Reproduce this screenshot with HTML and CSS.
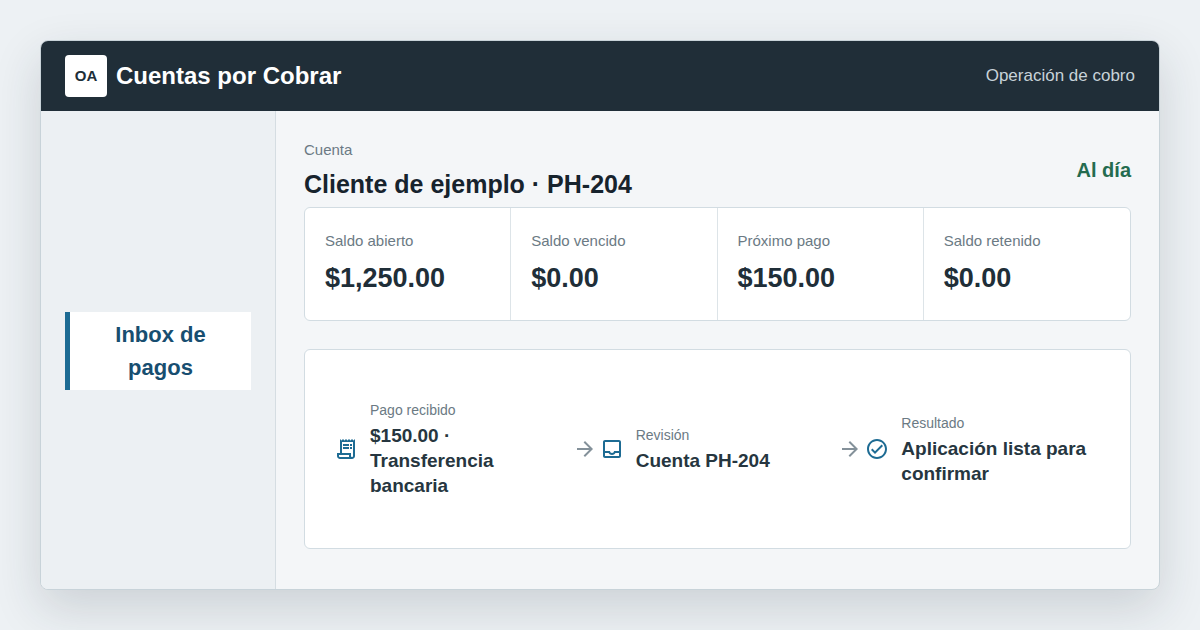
FILE: index.html
```
<!DOCTYPE html>
<html lang="es">

<head>
    <meta charset="UTF-8">
    <meta name="viewport" content="width=device-width, initial-scale=1.0">
    <title>Cuentas por Cobrar</title>
    <link rel="stylesheet" href="styles.css">
</head>

<body>
    <div class="window">
        <header class="topbar">
            <div class="brand">
                <span class="logo">OA</span>
                <span class="brand-name">Cuentas por Cobrar</span>
            </div>
            <span class="topbar-note">Operación de cobro</span>
        </header>

        <div class="layout">
            <nav class="sidebar">
                <button type="button" class="nav-item">Inbox de pagos</button>
            </nav>

            <main class="content">
                <div class="account">
                    <div>
                        <p class="label">Cuenta</p>
                        <h1>Cliente de ejemplo · PH-204</h1>
                    </div>
                    <strong class="status">Al día</strong>
                </div>

                <section class="balances">
                    <div class="balance">
                        <p class="label">Saldo abierto</p>
                        <p class="amount">$1,250.00</p>
                    </div>
                    <div class="balance">
                        <p class="label">Saldo vencido</p>
                        <p class="amount">$0.00</p>
                    </div>
                    <div class="balance">
                        <p class="label">Próximo pago</p>
                        <p class="amount">$150.00</p>
                    </div>
                    <div class="balance">
                        <p class="label">Saldo retenido</p>
                        <p class="amount">$0.00</p>
                    </div>
                </section>

                <section class="flow">
                    <div class="step">
                        <svg class="icon" viewBox="0 0 24 24" aria-hidden="true">
                            <path d="M19.5 3.5L18 2l-1.5 1.5L15 2l-1.5 1.5L12 2l-1.5 1.5L9 2 7.5 3.5 6 2v14H3v3c0 1.66 1.34 3 3 3h12c1.66 0 3-1.34 3-3V2l-1.5 1.5zM15 20H6c-.55 0-1-.45-1-1v-1h10v2zm4-1c0 .55-.45 1-1 1s-1-.45-1-1v-3H8V5h11v14z" />
                            <path d="M9 7h6v2H9zM16 7h2v2h-2zM9 10h6v2H9zM16 10h2v2h-2z" />
                        </svg>
                        <div>
                            <p class="step-label">Pago recibido</p>
                            <p class="step-value">$150.00 · Transferencia bancaria</p>
                        </div>
                    </div>
                    <svg class="icon arrow" viewBox="0 0 24 24" aria-hidden="true">
                        <path d="M12 4l-1.41 1.41L16.17 11H4v2h12.17l-5.58 5.59L12 20l8-8z" />
                    </svg>
                    <div class="step">
                        <svg class="icon" viewBox="0 0 24 24" aria-hidden="true">
                            <path d="M19 3H5c-1.1 0-2 .9-2 2v14c0 1.1.9 2 2 2h14c1.1 0 2-.9 2-2V5c0-1.1-.9-2-2-2zm0 16H5v-3h3.56c.69 1.19 1.97 2 3.45 2s2.75-.81 3.45-2H19v3zm0-5h-4.99c0 1.1-.9 2-2 2s-2-.9-2-2H5V5h14v9z" />
                        </svg>
                        <div>
                            <p class="step-label">Revisión</p>
                            <p class="step-value">Cuenta PH-204</p>
                        </div>
                    </div>
                    <svg class="icon arrow" viewBox="0 0 24 24" aria-hidden="true">
                        <path d="M12 4l-1.41 1.41L16.17 11H4v2h12.17l-5.58 5.59L12 20l8-8z" />
                    </svg>
                    <div class="step">
                        <svg class="icon" viewBox="0 0 24 24" aria-hidden="true">
                            <path d="M16.59 7.58L10 14.17l-2.59-2.58L6 13l4 4 8-8zM12 2C6.48 2 2 6.48 2 12s4.48 10 10 10 10-4.48 10-10S17.52 2 12 2zm0 18c-4.42 0-8-3.58-8-8s3.58-8 8-8 8 3.58 8 8-3.58 8-8 8z" />
                        </svg>
                        <div>
                            <p class="step-label">Resultado</p>
                            <p class="step-value">Aplicación lista para confirmar</p>
                        </div>
                    </div>
                </section>
            </main>
        </div>
    </div>
</body>

</html>
```

FILE: styles.css
```
* {
    box-sizing: border-box;
}

body {
    margin: 0;
    min-height: 100vh;
    padding: 40px;
    display: flex;
    background: #edf1f4;
    color: #202e38;
    font-family: "Liberation Sans", Arial, sans-serif;
}

h1,
p {
    margin: 0;
}

.window {
    flex: 1;
    display: flex;
    flex-direction: column;
    overflow: hidden;
    border: 1px solid #c8d3d9;
    border-radius: 8px;
    background: #f4f6f8;
    box-shadow: 0 18px 48px rgba(32, 45, 55, 0.16);
}

.topbar {
    display: flex;
    align-items: center;
    justify-content: space-between;
    padding: 14px 24px;
    background: #202e38;
    color: white;
}

.brand {
    display: flex;
    align-items: center;
    gap: 9px;
}

.logo {
    display: grid;
    place-items: center;
    width: 42px;
    height: 42px;
    border-radius: 4px;
    background: white;
    color: #202e38;
    font-size: 15px;
    font-weight: bold;
    line-height: 20px;
}

.brand-name {
    font-size: 24px;
    font-weight: bold;
}

.topbar-note {
    color: #c8d3d9;
    font-size: 17px;
}

.layout {
    flex: 1;
    display: grid;
    grid-template-columns: 235px 1fr;
}

.sidebar {
    display: flex;
    align-items: center;
    padding: 26px 24px 24px;
    border-right: 1px solid #d5dde2;
    background: #ecf0f3;
}

.nav-item {
    width: 100%;
    padding: 6px 24px;
    border: none;
    border-left: 5px solid #1d6b93;
    background: white;
    color: #174e70;
    font-family: inherit;
    font-size: 22px;
    font-weight: bold;
    line-height: 33px;
    cursor: pointer;
}

.content {
    padding: 28px;
}

.account {
    display: flex;
    align-items: center;
    justify-content: space-between;
    margin-bottom: 5px;
}

.label {
    margin-bottom: 6px;
    color: #6b7a84;
    font-size: 15px;
    line-height: 22px;
}

h1 {
    color: #17232d;
    font-size: 25px;
    line-height: 35px;
}

.status {
    color: #246b4f;
    font-size: 20px;
}

.balances {
    display: grid;
    grid-template-columns: repeat(4, 1fr);
    margin-bottom: 28px;
    border: 1px solid #d2dce2;
    border-radius: 6px;
    background: white;
}

.balance {
    padding: 22px 20px;
    border-right: 1px solid #dde4e8;
}

.balance:last-child {
    border-right: none;
}

.amount {
    font-size: 27px;
    font-weight: bold;
    line-height: 40px;
}

/* Payment flow */
.flow {
    display: grid;
    grid-template-columns: 1fr 24px 1fr 24px 1fr;
    align-items: center;
    gap: 3px;
    min-height: 200px;
    padding: 28px 29px;
    border: 1px solid #d2dce2;
    border-radius: 6px;
    background: white;
}

.step {
    display: flex;
    align-items: center;
    gap: 12px;
}

.icon {
    flex: none;
    width: 24px;
    height: 24px;
    fill: #1d6b93;
}

.arrow {
    fill: #84919a;
}

.step-label {
    margin-bottom: 2px;
    color: #6b7a84;
    font-size: 14px;
    line-height: 21px;
}

.step-value {
    color: #263640;
    font-size: 19px;
    font-weight: bold;
    line-height: 25px;
}

@media (max-width: 900px) {
    body {
        padding: 16px;
    }

    .layout {
        grid-template-columns: 1fr;
    }

    .balances {
        grid-template-columns: repeat(2, 1fr);
    }

    .flow {
        grid-template-columns: 1fr;
        gap: 12px;
    }

    .arrow {
        transform: rotate(90deg);
    }
}
```
